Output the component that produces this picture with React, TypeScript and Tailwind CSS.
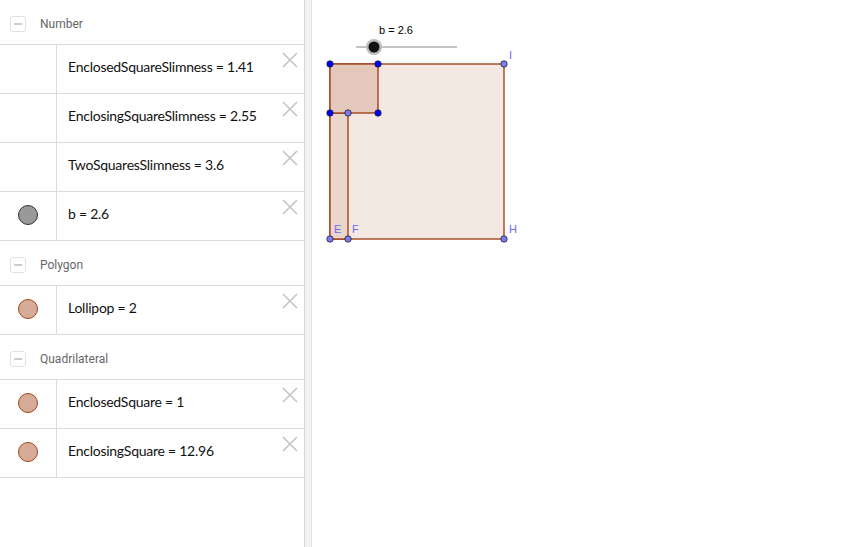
import { ReactNode } from 'react'

type Item = { label: string; dot?: 'gray' | 'brown' }
type Group = { title: string; items: Item[] }

const GROUPS: Group[] = [
  {
    title: 'Number',
    items: [
      { label: 'EnclosedSquareSlimness = 1.41' },
      { label: 'EnclosingSquareSlimness = 2.55' },
      { label: 'TwoSquaresSlimness = 3.6' },
      { label: 'b = 2.6', dot: 'gray' },
    ],
  },
  { title: 'Polygon', items: [{ label: 'Lollipop = 2', dot: 'brown' }] },
  {
    title: 'Quadrilateral',
    items: [
      { label: 'EnclosedSquare = 1', dot: 'brown' },
      { label: 'EnclosingSquare = 12.96', dot: 'brown' },
    ],
  },
]

function Dot({ kind }: { kind?: 'gray' | 'brown' }) {
  if (!kind) return null
  return kind === 'gray' ? (
    <span className="block w-[20px] h-[20px] rounded-full bg-[#999999] border border-[#333333]" />
  ) : (
    <span className="block w-[20px] h-[20px] rounded-full bg-[#d6ab97] border border-[#a4481e]" />
  )
}

function CloseX() {
  return (
    <svg width="16" height="16" viewBox="0 0 16 16" className="absolute right-[6px] top-[7px]">
      <path d="M1 1 L15 15 M15 1 L1 15" stroke="#c4c4c4" strokeWidth="1.6" />
    </svg>
  )
}

function Header({ title }: { title: string }): ReactNode {
  return (
    <div className="h-[45px] pt-[3px] flex items-center border-b border-[#dcdcdc]">
      <span className="ml-[10px] w-[16px] h-[16px] rounded-[3px] border border-[#e0e0e0] flex items-center justify-center">
        <span className="block w-[8px] h-[2px] bg-[#cccccc]" />
      </span>
      <span className="ml-[14px] text-[12px] text-[#666666]" style={{ fontFamily: 'Roboto, sans-serif' }}>
        {title}
      </span>
    </div>
  )
}

function Row({ item }: { item: Item }) {
  return (
    <div className="relative h-[49px] flex border-b border-[#dcdcdc]">
      <div className="w-[57px] shrink-0 pb-[3px] border-r border-[#dcdcdc] flex items-center justify-center">
        <Dot kind={item.dot} />
      </div>
      <div
        className="flex items-center pl-[11px] pb-[5px] text-[14px] tracking-[-0.25px] text-[#111111]"
        style={{ fontFamily: 'Lato, sans-serif' }}
      >
        {item.label}
      </div>
      <CloseX />
    </div>
  )
}

function Graphics() {
  const dark = '#0000ff'
  const light = '#7b7bf5'
  const pt = (x: number, y: number, c: string) => (
    <circle key={`${x}-${y}`} cx={x} cy={y} r="3.2" fill={c} stroke="#222" strokeWidth="0.8" />
  )
  return (
    <svg width="551" height="547" className="block" style={{ fontFamily: '"Liberation Sans", sans-serif' }}>
      {/* slider */}
      <line x1="44" y1="47" x2="145" y2="47" stroke="#888" strokeWidth="1" />
      <circle cx="62" cy="47" r="8" fill="#bbbbbb" />
      <circle cx="62" cy="47" r="5.5" fill="#111" />
      <text x="67" y="34" fontSize="11" fill="#000">b = 2.6</text>

      {/* shapes */}
      <rect x="18" y="64" width="174" height="175" fill="#f4e8e2" stroke="#9a3a10" strokeWidth="1.3" />
      <rect x="18" y="113" width="18" height="126" fill="#ead6cc" stroke="#9a3a10" strokeWidth="1.3" />
      <rect x="18" y="64" width="48" height="49" fill="#e4c8bb" stroke="#9a3a10" strokeWidth="1.3" />

      {pt(18, 64, dark)}
      {pt(66, 64, dark)}
      {pt(18, 113, dark)}
      {pt(66, 113, dark)}
      {pt(36, 113, light)}
      {pt(192, 64, light)}
      {pt(18, 239, light)}
      {pt(36, 239, light)}
      {pt(192, 239, light)}

      <g fontSize="11" fill="#6b6bf0">
        <text x="197" y="59">I</text>
        <text x="22" y="233">E</text>
        <text x="40" y="233">F</text>
        <text x="197" y="233">H</text>
      </g>
    </svg>
  )
}

export default function App() {
  return (
    <div className="w-[863px] h-[547px] flex bg-white overflow-hidden">
      <div className="w-[305px] shrink-0 border-r border-[#d8d8d8]">
        {GROUPS.map(g => (
          <div key={g.title}>
            <Header title={g.title} />
            {g.items.map(it => (
              <Row key={it.label} item={it} />
            ))}
          </div>
        ))}
      </div>
      <div className="w-[7px] shrink-0 bg-[#f2f2f2] border-r border-[#e2e2e2]" />
      <div className="flex-1">
        <Graphics />
      </div>
    </div>
  )
}
